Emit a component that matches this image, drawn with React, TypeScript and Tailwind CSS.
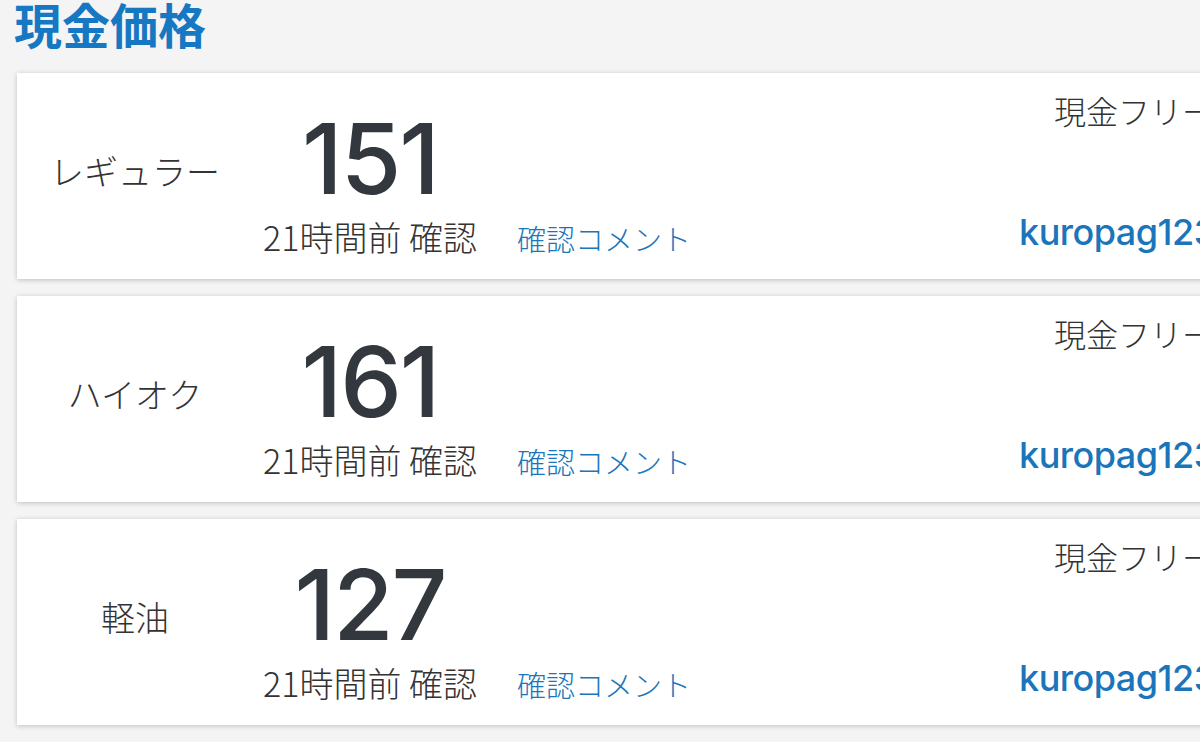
import React from 'react'

interface FuelPrice {
  label: string
  price: string
  checked: string
  payment: string
  user: string
}

const prices: FuelPrice[] = [
  { label: 'レギュラー', price: '151', checked: '21時間前 確認', payment: '現金フリー', user: 'kuropag123' },
  { label: 'ハイオク', price: '161', checked: '21時間前 確認', payment: '現金フリー', user: 'kuropag123' },
  { label: '軽油', price: '127', checked: '21時間前 確認', payment: '現金フリー', user: 'kuropag123' },
]

const jp = "font-['Noto_Sans_CJK_JP','Noto_Sans',sans-serif]"

function PriceCard({ item }: { item: FuelPrice }) {
  return (
    <div className="flex h-[206px] w-[1260px] shrink-0 bg-white shadow-[0_1px_5px_rgba(0,0,0,0.22)]">
      {/* Fuel type */}
      <div className={`flex w-[236px] items-center justify-center pb-[10px] text-[34px] font-light leading-none text-[#333] ${jp}`}>
        {item.label}
      </div>

      {/* Price + confirmation */}
      <div className="ml-[10px] flex flex-col pt-[37px]">
        <div className="w-[214px] text-center font-['Inter',sans-serif] text-[98px] font-medium leading-[98px] tracking-[-2px] text-[#33383f]">
          {item.price}
        </div>
        <div className="mt-[12px] flex items-baseline">
          <span className={`w-[214px] whitespace-nowrap text-[34px] font-light leading-[34px] text-[#333] ${jp}`}>
            {item.checked}
          </span>
          <a className={`ml-[40px] whitespace-nowrap text-[29px] font-light leading-[34px] text-[#1a75bb] ${jp}`}>
            確認コメント
          </a>
        </div>
      </div>

      {/* Payment + reporter */}
      <div className="ml-auto flex w-[258px] flex-col pt-[19px]">
        <div className={`pl-[35px] whitespace-nowrap text-[32px] font-light leading-[36px] text-[#333] ${jp}`}>
          {item.payment}
        </div>
        <div className="mt-[84px] whitespace-nowrap font-['Inter',sans-serif] text-[36px] font-medium leading-[40px] tracking-[-0.5px] text-[#1a75bb]">
          {item.user}
        </div>
      </div>
    </div>
  )
}

export default function App() {
  return (
    <div className="h-[742px] w-[1200px] overflow-hidden bg-[#f4f4f4]">
      <h1 className={`pl-[14px] text-[48px] font-bold leading-[46px] text-[#1677c2] ${jp}`}>
        現金価格
      </h1>
      <div className="mt-[27px] flex flex-col gap-[17px] pl-[17px]">
        {prices.map((item) => (
          <PriceCard key={item.label} item={item} />
        ))}
      </div>
    </div>
  )
}
